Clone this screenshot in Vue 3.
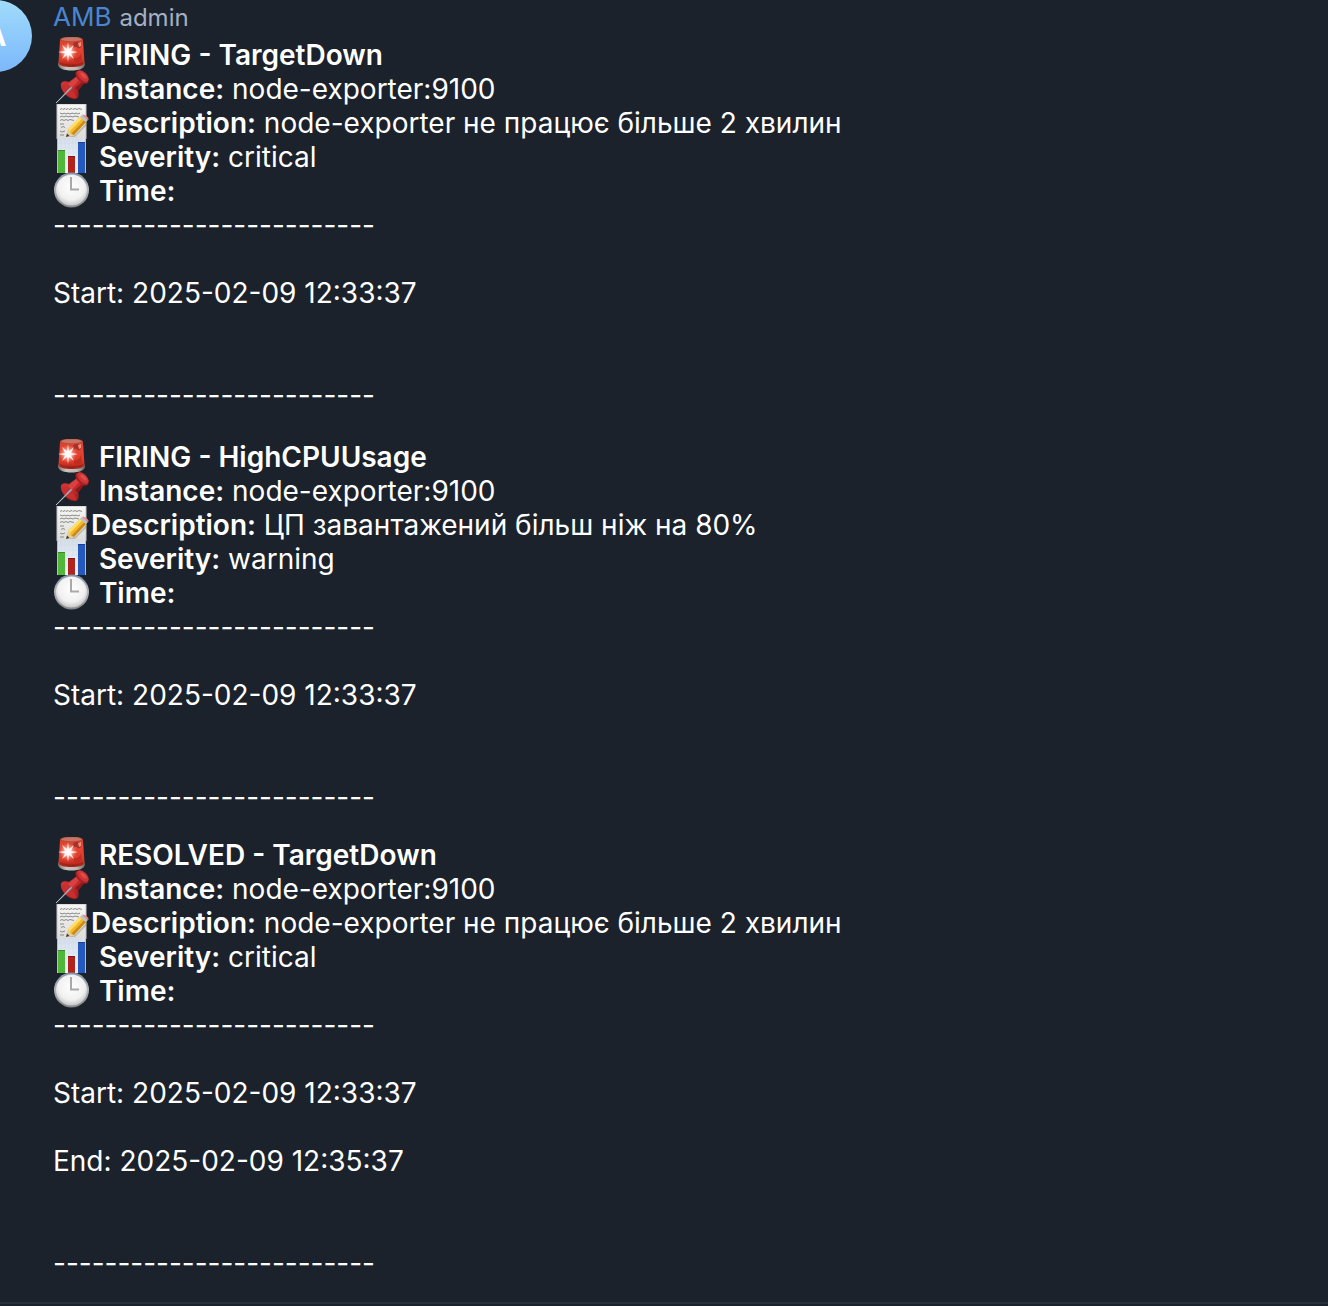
<script setup>
const rule = '-'.repeat(25)

const alerts = [
  {
    title: 'FIRING - TargetDown',
    instance: 'node-exporter:9100',
    description: 'node-exporter не працює більше 2 хвилин',
    severity: 'critical',
    start: '2025-02-09 12:33:37'
  },
  {
    title: 'FIRING - HighCPUUsage',
    instance: 'node-exporter:9100',
    description: 'ЦП завантажений більш ніж на 80%',
    severity: 'warning',
    start: '2025-02-09 12:33:37'
  },
  {
    title: 'RESOLVED - TargetDown',
    instance: 'node-exporter:9100',
    description: 'node-exporter не працює більше 2 хвилин',
    severity: 'critical',
    start: '2025-02-09 12:33:37',
    end: '2025-02-09 12:35:37'
  }
]
</script>

<template>
  <div class="chat">
    <svg class="sprite" width="0" height="0" aria-hidden="true">
      <defs>
        <linearGradient id="siren-body" x1="0" y1="0" x2="0" y2="1">
          <stop offset="0" stop-color="#b5432f" />
          <stop offset="0.3" stop-color="#e64733" />
          <stop offset="0.75" stop-color="#dc3a28" />
          <stop offset="1" stop-color="#a82219" />
        </linearGradient>
        <linearGradient id="siren-base" x1="0" y1="0" x2="1" y2="0">
          <stop offset="0" stop-color="#77726e" />
          <stop offset="0.3" stop-color="#c9c4be" />
          <stop offset="0.7" stop-color="#bcb7b2" />
          <stop offset="1" stop-color="#6a6663" />
        </linearGradient>
        <radialGradient id="siren-glow">
          <stop offset="0" stop-color="#ffffff" />
          <stop offset="0.35" stop-color="#ffd5cb" stop-opacity="0.85" />
          <stop offset="1" stop-color="#ff8a75" stop-opacity="0" />
        </radialGradient>
        <linearGradient id="pin-red" x1="0" y1="0" x2="1" y2="1">
          <stop offset="0" stop-color="#d83a39" />
          <stop offset="0.5" stop-color="#c42a2b" />
          <stop offset="1" stop-color="#8d181b" />
        </linearGradient>
        <linearGradient id="paper" x1="0" y1="0" x2="0" y2="1">
          <stop offset="0" stop-color="#f6f6f4" />
          <stop offset="1" stop-color="#dcdcda" />
        </linearGradient>
        <linearGradient id="chart-paper" x1="0" y1="0" x2="0" y2="1">
          <stop offset="0" stop-color="#d5deea" />
          <stop offset="1" stop-color="#f5f8fc" />
        </linearGradient>
        <linearGradient id="clock-rim" x1="0" y1="0" x2="0" y2="1">
          <stop offset="0" stop-color="#8496a8" />
          <stop offset="0.5" stop-color="#b4b7ba" />
          <stop offset="1" stop-color="#858789" />
        </linearGradient>
        <radialGradient id="clock-face" cx="0.5" cy="0.4" r="0.6">
          <stop offset="0" stop-color="#ffffff" />
          <stop offset="0.7" stop-color="#f1f1f1" />
          <stop offset="1" stop-color="#c6c6c6" />
        </radialGradient>
      </defs>
      <symbol id="siren" viewBox="0 0 38 36">
        <path d="M5 28c0 4.500 6 6.500 13.500 6.500S32 32.500 32 28l-1-3H6z" fill="url(#siren-base)" />
        <path d="M7 4C7 1.500 12 1 18.500 1S30 1.500 30 4l1.500 23c0 2.500-6 4-13 4s-13-1.500-13-4z" fill="url(#siren-body)" />
        <path d="M8 3.500C10 1.500 14 1.300 18.500 1.300s8.500.2 10.500 2.200c-2 1.200-6 1.700-10.500 1.700S10 4.700 8 3.500z" fill="#c98a7d" opacity="0.7" />
        <path d="M20 8c2-3 7-3 8 0s-1 5-3 4-2-2-5 0z" fill="#a3322c" />
        <path d="M25 7l3-1v4l-2 1z" fill="#f58d7c" />
        <path d="M21 22c3 1 6-1 7-5l1 8c-3 2-6 2-8 1z" fill="#c22c20" />
        <path d="M7 26c5 3 17 3 23 0l.3 1.500c-4 3.500-19 3.500-23.500 0z" fill="#8c211b" opacity="0.6" />
        <circle cx="15" cy="16" r="9" fill="url(#siren-glow)" />
        <path d="M15 6l1 7 5-4-3 6 7 1-7 1.500 3 5.500-5-4-1 7-1-7-5 4 3-5.500L5 16l7-1-3-6 5 4z" fill="#fff" opacity="0.85" />
      </symbol>
      <symbol id="pin" viewBox="0 0 38 36">
        <path d="M8 16c-1-4 3-6 8-4l8-6 7 7-6 7c1 4 1 8-2 9-3 .5-7-1-10-4s-5-6-5-9z" fill="url(#pin-red)" />
        <path d="M8.500 15c4-2 14 6 15 13-5 1-15-6-15-13z" fill="#c92e2f" />
        <path d="M15 14l8-7 3 3-7 8z" fill="#e04d49" opacity="0.65" />
        <path d="M22 18l7-6 2 1-6 8z" fill="#8e191d" />
        <ellipse cx="29" cy="7" rx="8" ry="4.500" transform="rotate(45 29 7)" fill="#a81e22" />
        <ellipse cx="30" cy="6" rx="7" ry="3.800" transform="rotate(45 30 6)" fill="#d03535" />
        <ellipse cx="30.500" cy="5.500" rx="4" ry="1.500" transform="rotate(45 30.500 5.500)" fill="#e65a55" opacity="0.7" />
        <path d="M2 34.500L18 16.500l1.500 1.500z" fill="#7f92a1" />
        <path d="M3 33L18 17.500" stroke="#b3c4d0" stroke-width="1" />
      </symbol>
      <symbol id="note" viewBox="0 0 38 36">
        <path d="M4 0h29v35H4z" fill="url(#paper)" />
        <path d="M4 0h29v35H4z" fill="none" stroke="#c4c4c3" stroke-width="1" />
        <g fill="none" stroke="#8a8a89" stroke-width="1">
          <path d="M7 5.500l2-1 1 1 2-1 1 1 2-1 1 1 3-1 1 1 2-1 2 1 2-1 3 1" />
          <path d="M7 9l3 1 1-1 2 1 2-1 1 1 4-1 1 1 2-1 2 1 2-1" />
          <path d="M7 13l2-1 2 1 2-1 3 1 1-1 3 1 2-1 4 1" />
          <path d="M7 16.500l2-1 2 1 2-1 2 1 2-1 4 1" />
          <path d="M7 20h4M8 23.500l2-1 2 1M7 27l2 1 3-1M7 31h4" />
        </g>
        <path d="M14 33l8-2 12-13-1 4-11 11z" fill="#8c8777" opacity="0.45" />
        <path d="M13 33l2-8 5 6z" fill="#e9cc96" />
        <path d="M13 33l1-3.500 2.500 2.500z" fill="#383532" />
        <path d="M15 25L27 13l6 5-12 13-3-1-1-3z" fill="#f2b929" />
        <path d="M15 25L27 13l2 1.700L17 27z" fill="#ffdf67" />
        <path d="M18.500 29.500L31 16.500l2 1.500-12 13z" fill="#cc8a18" />
        <path d="M27 13l2-2 6 5-2 2z" fill="#b9c2c7" />
        <path d="M29 11c2-1.500 7 2 6.500 4.500L35 16l-6-5z" fill="#ee8489" />
      </symbol>
      <symbol id="chart" viewBox="0 0 38 36">
        <path d="M4 0h29v35H4z" fill="url(#chart-paper)" />
        <path d="M8 0v35M12 0v35M16 0v35M20 0v35M24 0v35M28 0v35M4 5h29M4 10h29M4 15h29M4 20h29M4 25h29M4 30h29" stroke="#c7d4e6" stroke-width="1" opacity="0.3" />
        <path d="M4.500 0v35M32.500 0v35" stroke="#b7bec7" />
        <path d="M5 12h7v23H5z" fill="#4fb83a" />
        <path d="M15 18h7v17h-7z" fill="#b1231e" />
        <path d="M25 4h7v31h-7z" fill="#2459bd" />
        <path d="M5 12h7v1H5z" fill="#388d2a" />
        <path d="M15 18h7v1h-7z" fill="#801713" />
        <path d="M25 4h7v1h-7z" fill="#173f92" />
      </symbol>
      <symbol id="clock" viewBox="0 0 38 36">
        <circle cx="18.500" cy="18" r="17.500" fill="url(#clock-rim)" />
        <circle cx="18.500" cy="18" r="15.500" fill="url(#clock-face)" />
        <path d="M18 5v12.500h8" fill="none" stroke="#a9a9a9" stroke-width="2" />
      </symbol>
    </svg>

    <main class="post">
      <div class="avatar" aria-hidden="true">A</div>
      <div class="body">
        <header class="author"><a class="name" href="#">AMB</a><span class="role">admin</span></header>
        <article v-for="(alert, i) in alerts" :key="i" class="alert">
          <p><svg class="emoji"><use href="#siren" /></svg> <b>{{ alert.title }}</b></p>
          <p><svg class="emoji"><use href="#pin" /></svg> <b>Instance:</b> {{ alert.instance }}</p>
          <p><svg class="emoji"><use href="#note" /></svg><b>Description:</b> {{ alert.description }}</p>
          <p><svg class="emoji"><use href="#chart" /></svg> <b>Severity:</b> {{ alert.severity }}</p>
          <p><svg class="emoji"><use href="#clock" /></svg> <b>Time:</b></p>
          <p>{{ rule }}</p>
          <p class="stamp">Start: {{ alert.start }}</p>
          <p v-if="alert.end" class="stamp">End: {{ alert.end }}</p>
          <p class="closing">{{ rule }}</p>
        </article>
      </div>
    </main>
    <footer class="composer"></footer>
  </div>
</template>

<style>
body {
  margin: 0;
  background: #1b222b;
}
</style>

<style scoped>
.chat {
  display: flex;
  flex-direction: column;
  min-height: 100vh;
  overflow: hidden;
  background: #1b222b;
  color: #fff;
  font-family: Inter, "Noto Sans", sans-serif;
  font-size: 28px;
  line-height: 34px;
}

.sprite {
  position: absolute;
}

.post {
  display: flex;
  flex: 1;
  gap: 21px;
  padding-bottom: 22px;
}

.avatar {
  flex: none;
  width: 72px;
  height: 72px;
  margin-left: -40px;
  border-radius: 50%;
  background: linear-gradient(#a0dcfb, #7cb8fb);
  font-weight: 700;
  line-height: 72px;
  text-align: center;
}

.body {
  flex: 1;
  min-width: 0;
}

.author {
  display: flex;
  align-items: baseline;
  gap: 8px;
  height: 38px;
}

.name {
  color: #4a86d0;
  font-size: 26px;
  text-decoration: none;
}

.role {
  color: #a3b0c5;
  font-size: 24px;
}

.alert {
  margin-bottom: 28px;
}

.alert:nth-of-type(2) {
  margin-bottom: 24px;
}

.alert:last-child {
  margin-bottom: 0;
}

p {
  margin: 0;
}

b {
  font-weight: 600;
}

.emoji {
  width: 38px;
  height: 36px;
  margin: -2px 0 0;
  vertical-align: top;
}

.stamp {
  margin-top: 34px;
}

.closing {
  margin-top: 68px;
}

.composer {
  height: 2px;
  border-top: 2px solid #263140;
}
</style>
